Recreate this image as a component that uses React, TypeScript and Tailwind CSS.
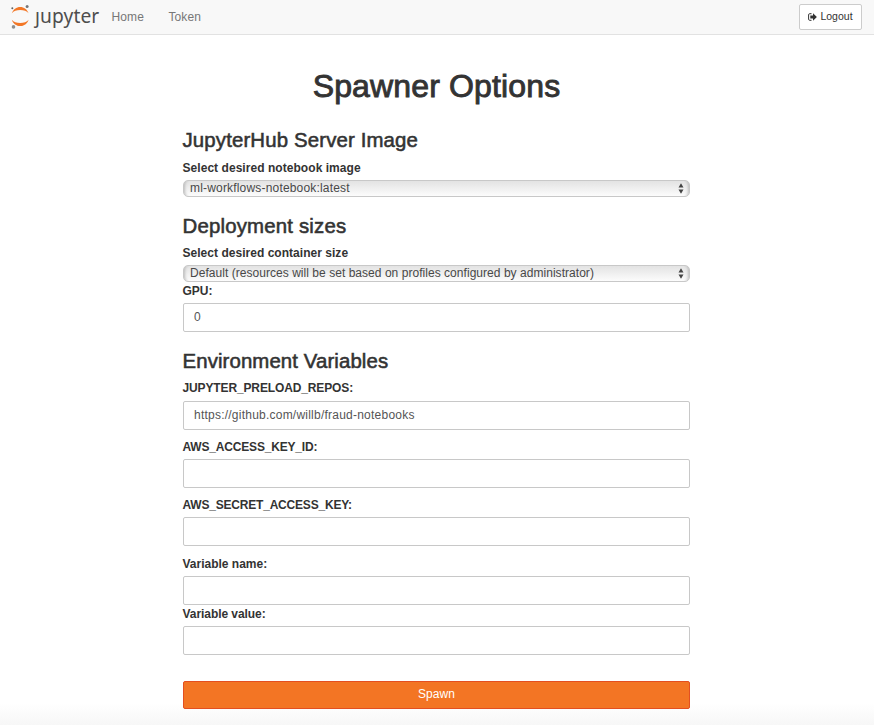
import type { ReactNode } from "react";

function Heading({ children, className }: { children: ReactNode; className: string }) {
  return (
    <h3 className={`-ml-[0.5px] flex h-6 items-center whitespace-nowrap text-[20.4px] leading-6 [-webkit-text-stroke:0.55px_#333] ${className}`}>
      <span>{children}</span>
    </h3>
  );
}

function Label({ children, className }: { children: ReactNode; className: string }) {
  return (
    <label className={`-ml-[0.5px] flex h-4 items-center whitespace-nowrap text-[12px] font-bold leading-4 ${className}`}>
      <span>{children}</span>
    </label>
  );
}

function Input({ value = "", className = "" }: { value?: string; className?: string }) {
  return (
    <input
      defaultValue={value}
      className={`block h-[29px] w-full rounded-[2px] border border-[#c8c8c8] bg-white px-[10px] pb-[2px] text-[12px] tracking-[0.23px] text-[#555] outline-none ${className}`}
    />
  );
}

function Select({ children, className = "" }: { children: ReactNode; className?: string }) {
  return (
    <div className={`flex h-[17px] items-center justify-between rounded-[5px] border border-[#c8c8c8] bg-linear-to-b from-[#e3e3e3] to-[#fcfcfc] pr-[5px] pl-[6px] text-[12px] leading-[15px] text-[#484848] shadow-[inset_4px_0_3px_-3px_#bbb,inset_-4px_0_3px_-3px_#bbb] ${className}`}>
      <span className="whitespace-nowrap">{children}</span>
      <svg width="6" height="11" viewBox="0 0 6 11" fill="#444">
        <path d="M3 0.3 5.5 4.5H.5zM3 10.7 5.5 6.5H.5z" />
      </svg>
    </div>
  );
}

export default function App() {
  return (
    <div className="flex h-[725px] w-[874px] flex-col overflow-hidden bg-white bg-linear-to-b from-white from-97% to-[#f7f7f7] font-['Liberation_Sans',Arial,sans-serif] text-[#333]">
      <nav className="flex h-[35px] shrink-0 items-center border-b border-[#e2e2e2] bg-[#f8f8f8] pr-3 pl-[10px] text-[12px] text-[#777]">
        <div className="flex h-[34px] items-center">
          <svg width="22" height="26" viewBox="0 0 22 26">
            <path d="M1.8 9.2C3.2 5.200 6.400 2.900 10.200 2.900s7 2.300 8.400 6.300C16.800 7 13.800 5.900 10.200 5.900S3.600 7 1.800 9.200z" fill="#f37726" />
            <path d="M1.800 15.700c1.400 4 4.600 6.300 8.400 6.300s7-2.300 8.400-6.300c-1.800 2.200-4.800 3.300-8.400 3.300s-6.600-1.100-8.400-3.300z" fill="#f37726" />
            <circle cx="17.100" cy="2.500" r="1.500" fill="#767677" />
            <circle cx="3.500" cy="22.900" r="1.800" fill="#8e8e8e" />
            <circle cx="2.300" cy="4.300" r="1" fill="#616262" />
          </svg>
          <span className="flex h-6 w-[67px] items-start pl-[3px] font-['Noto_Sans','Open_Sans',sans-serif] text-[19.2px] leading-[22px] tracking-[0.1px] text-[#4e4e4e]">
            <span className="[clip-path:inset(7px_-4px_-4px_-6px)]">j</span>
            <span>upyter</span>
          </span>
        </div>
        <a className="ml-[12.5px] w-[57px] tracking-[0.1px]">Home</a>
        <a className="flex-1 tracking-[0.1px]">Token</a>
        <button className="flex h-[26px] w-[63px] items-center justify-center gap-[3px] rounded-[2px] border border-[#ccc] bg-white text-[10.500px] text-[#333]">
          <svg width="9" height="8" viewBox="0 0 9 8">
            <path d="M3.500.700H1.700Q.600.700.600 1.800v4.400q0 1.100 1.100 1.100h1.800" fill="none" stroke="#333" strokeWidth="1" />
            <path d="M5 .300 8.900 4 5 7.700V5.600H2.300V2.400H5z" fill="#333" />
          </svg>
          <span>Logout</span>
        </button>
      </nav>
      <main className="ml-[183px] flex w-[507px] flex-col">
        <h1 className="mt-[31px] flex h-10 items-center justify-center whitespace-nowrap text-[32px] leading-10 tracking-[0.14px] [-webkit-text-stroke:0.9px_#333]">
          <span>Spawner Options</span>
        </h1>
        <Heading className="mt-[22px] tracking-[0.14px]">JupyterHub Server Image</Heading>
        <Label className="mt-2 tracking-[0.05px]">Select desired notebook image</Label>
        <Select className="mt-1 tracking-[0.18px]">ml-workflows-notebook:latest</Select>
        <Heading className="mt-[17px] tracking-[0.18px]">Deployment sizes</Heading>
        <Label className="mt-[7px] tracking-[0.03px]">Select desired container size</Label>
        <Select className="mt-1 tracking-[0.04px]">Default (resources will be set based on profiles configured by administrator)</Select>
        <Label className="mt-[1px]">GPU:</Label>
        <Input value="0" className="mt-1" />
        <Heading className="mt-[17px] tracking-[0.1px]">Environment Variables</Heading>
        <Label className="mt-[7px] tracking-[-0.13px]">JUPYTER_PRELOAD_REPOS:</Label>
        <Input value="https://github.com/willb/fraud-notebooks" className="mt-[5px]" />
        <Label className="mt-[9px] tracking-[-0.18px]">AWS_ACCESS_KEY_ID:</Label>
        <Input className="mt-1" />
        <Label className="mt-[9px] tracking-[-0.2px]">AWS_SECRET_ACCESS_KEY:</Label>
        <Input className="mt-1" />
        <Label className="mt-[10px]">Variable name:</Label>
        <Input className="mt-1" />
        <Label className="mt-[1px] tracking-[-0.06px]">Variable value:</Label>
        <Input className="mt-1" />
        <button className="mt-[26px] h-[28px] rounded-[2px] border border-[#e34f21] bg-[#f37524] pb-[2px] text-[12px] tracking-[0.1px] text-white">Spawn</button>
      </main>
    </div>
  );
}
